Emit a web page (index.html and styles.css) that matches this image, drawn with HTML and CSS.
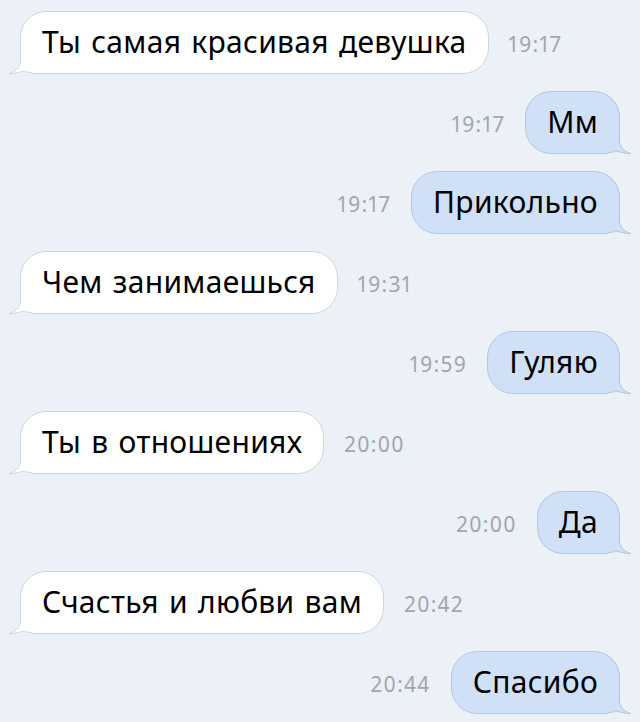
FILE: index.html
```html
<!DOCTYPE html>
<html lang="ru">
<head>
    <meta charset="UTF-8">
    <meta name="viewport" content="width=device-width, initial-scale=1.0">
    <title>Диалог</title>
    <link rel="stylesheet" href="styles.css">
</head>
<body>
    <div class="chat">
        <div class="row in">
            <div class="bubble">Ты самая красивая девушка
                <svg class="tail" viewBox="0 0 24 27" width="24" height="27"><path class="tail-fill" d="M12.5,0 L12.5,12 C12.5,18 9,23 1,25.5 C7,25.5 12,24 16,23 C18,24 20,24.5 24,24.5 L24,0 Z"/><path class="tail-bg" d="M1,25.5 C7,25.5 12,24 16,23 C18,24 20,24.5 24,24.5 L24,27 L0,27 Z"/><path class="tail-line" d="M12.5,0 L12.5,12 C12.5,18 9,23 1,25.5 C7,25.5 12,24 16,23 C18,24 20,24.5 24,24.5"/></svg>
            </div>
            <span class="time">19:17</span>
        </div>
        <div class="row out">
            <span class="time">19:17</span>
            <div class="bubble">Мм
                <svg class="tail" viewBox="0 0 24 27" width="24" height="27"><path class="tail-fill" d="M12.5,0 L12.5,12 C12.5,18 9,23 1,25.5 C7,25.5 12,24 16,23 C18,24 20,24.5 24,24.5 L24,0 Z"/><path class="tail-bg" d="M1,25.5 C7,25.5 12,24 16,23 C18,24 20,24.5 24,24.5 L24,27 L0,27 Z"/><path class="tail-line" d="M12.5,0 L12.5,12 C12.5,18 9,23 1,25.5 C7,25.5 12,24 16,23 C18,24 20,24.5 24,24.5"/></svg>
            </div>
        </div>
        <div class="row out">
            <span class="time">19:17</span>
            <div class="bubble">Прикольно
                <svg class="tail" viewBox="0 0 24 27" width="24" height="27"><path class="tail-fill" d="M12.5,0 L12.5,12 C12.5,18 9,23 1,25.5 C7,25.5 12,24 16,23 C18,24 20,24.5 24,24.5 L24,0 Z"/><path class="tail-bg" d="M1,25.5 C7,25.5 12,24 16,23 C18,24 20,24.5 24,24.5 L24,27 L0,27 Z"/><path class="tail-line" d="M12.5,0 L12.5,12 C12.5,18 9,23 1,25.5 C7,25.5 12,24 16,23 C18,24 20,24.5 24,24.5"/></svg>
            </div>
        </div>
        <div class="row in">
            <div class="bubble">Чем занимаешься
                <svg class="tail" viewBox="0 0 24 27" width="24" height="27"><path class="tail-fill" d="M12.5,0 L12.5,12 C12.5,18 9,23 1,25.5 C7,25.5 12,24 16,23 C18,24 20,24.5 24,24.5 L24,0 Z"/><path class="tail-bg" d="M1,25.5 C7,25.5 12,24 16,23 C18,24 20,24.5 24,24.5 L24,27 L0,27 Z"/><path class="tail-line" d="M12.5,0 L12.5,12 C12.5,18 9,23 1,25.5 C7,25.5 12,24 16,23 C18,24 20,24.5 24,24.5"/></svg>
            </div>
            <span class="time">19:31</span>
        </div>
        <div class="row out">
            <span class="time">19:59</span>
            <div class="bubble">Гуляю
                <svg class="tail" viewBox="0 0 24 27" width="24" height="27"><path class="tail-fill" d="M12.5,0 L12.5,12 C12.5,18 9,23 1,25.5 C7,25.5 12,24 16,23 C18,24 20,24.5 24,24.5 L24,0 Z"/><path class="tail-bg" d="M1,25.5 C7,25.5 12,24 16,23 C18,24 20,24.5 24,24.5 L24,27 L0,27 Z"/><path class="tail-line" d="M12.5,0 L12.5,12 C12.5,18 9,23 1,25.5 C7,25.5 12,24 16,23 C18,24 20,24.5 24,24.5"/></svg>
            </div>
        </div>
        <div class="row in">
            <div class="bubble">Ты в отношениях
                <svg class="tail" viewBox="0 0 24 27" width="24" height="27"><path class="tail-fill" d="M12.5,0 L12.5,12 C12.5,18 9,23 1,25.5 C7,25.5 12,24 16,23 C18,24 20,24.5 24,24.5 L24,0 Z"/><path class="tail-bg" d="M1,25.5 C7,25.5 12,24 16,23 C18,24 20,24.5 24,24.5 L24,27 L0,27 Z"/><path class="tail-line" d="M12.5,0 L12.5,12 C12.5,18 9,23 1,25.5 C7,25.5 12,24 16,23 C18,24 20,24.5 24,24.5"/></svg>
            </div>
            <span class="time">20:00</span>
        </div>
        <div class="row out">
            <span class="time">20:00</span>
            <div class="bubble">Да
                <svg class="tail" viewBox="0 0 24 27" width="24" height="27"><path class="tail-fill" d="M12.5,0 L12.5,12 C12.5,18 9,23 1,25.5 C7,25.5 12,24 16,23 C18,24 20,24.5 24,24.5 L24,0 Z"/><path class="tail-bg" d="M1,25.5 C7,25.5 12,24 16,23 C18,24 20,24.5 24,24.5 L24,27 L0,27 Z"/><path class="tail-line" d="M12.5,0 L12.5,12 C12.5,18 9,23 1,25.5 C7,25.5 12,24 16,23 C18,24 20,24.5 24,24.5"/></svg>
            </div>
        </div>
        <div class="row in">
            <div class="bubble">Счастья и любви вам
                <svg class="tail" viewBox="0 0 24 27" width="24" height="27"><path class="tail-fill" d="M12.5,0 L12.5,12 C12.5,18 9,23 1,25.5 C7,25.5 12,24 16,23 C18,24 20,24.5 24,24.5 L24,0 Z"/><path class="tail-bg" d="M1,25.5 C7,25.5 12,24 16,23 C18,24 20,24.5 24,24.5 L24,27 L0,27 Z"/><path class="tail-line" d="M12.5,0 L12.5,12 C12.5,18 9,23 1,25.5 C7,25.5 12,24 16,23 C18,24 20,24.5 24,24.5"/></svg>
            </div>
            <span class="time">20:42</span>
        </div>
        <div class="row out">
            <span class="time">20:44</span>
            <div class="bubble">Спасибо
                <svg class="tail" viewBox="0 0 24 27" width="24" height="27"><path class="tail-fill" d="M12.5,0 L12.5,12 C12.5,18 9,23 1,25.5 C7,25.5 12,24 16,23 C18,24 20,24.5 24,24.5 L24,0 Z"/><path class="tail-bg" d="M1,25.5 C7,25.5 12,24 16,23 C18,24 20,24.5 24,24.5 L24,27 L0,27 Z"/><path class="tail-line" d="M12.5,0 L12.5,12 C12.5,18 9,23 1,25.5 C7,25.5 12,24 16,23 C18,24 20,24.5 24,24.5"/></svg>
            </div>
        </div>
    </div>
</body>
</html>
```

FILE: styles.css
```css
body {
    margin: 0;
    background-color: #ecf1f8;
    font-family: "Noto Sans", "Liberation Sans", Arial, sans-serif;
    color: #000;
}
.chat {
    display: flex;
    flex-direction: column;
    gap: 17px;
    padding: 11px 20px 0;
}
.row {
    display: flex;
    align-items: center;
    gap: 20px;
}
.row.out {
    justify-content: flex-end;
}
.bubble {
    position: relative;
    box-sizing: border-box;
    height: 63px;
    display: flex;
    align-items: center;
    padding: 0 21px 2px;
    font-size: 30px;
    letter-spacing: 0.3px;
    word-spacing: 2px;
    border: 1px solid;
    border-radius: 26px;
    white-space: nowrap;
}
.time {
    font-size: 21px;
    letter-spacing: 1.3px;
    font-variant-numeric: proportional-nums;
    color: #a2a6ad;
    padding-top: 3px;
}
.in .bubble {
    background: #fff;
    border-color: #cfd6df;
    border-bottom-left-radius: 0;
}
.out .bubble {
    background: #cfe0f7;
    border-color: #b5c7df;
    border-bottom-right-radius: 0;
}
.tail {
    position: absolute;
    bottom: -2px;
    overflow: visible;
}
.in .tail {
    left: -13px;
}
.out .tail {
    right: -13px;
    transform: scaleX(-1);
}
.tail-line {
    fill: none;
    stroke-width: 1;
}
.tail-bg {
    fill: #ecf1f8;
}
.in .tail-fill { fill: #fff; }
.in .tail-line { stroke: #cfd6df; }
.out .tail-fill { fill: #cfe0f7; }
.out .tail-line { stroke: #b5c7df; }
```
